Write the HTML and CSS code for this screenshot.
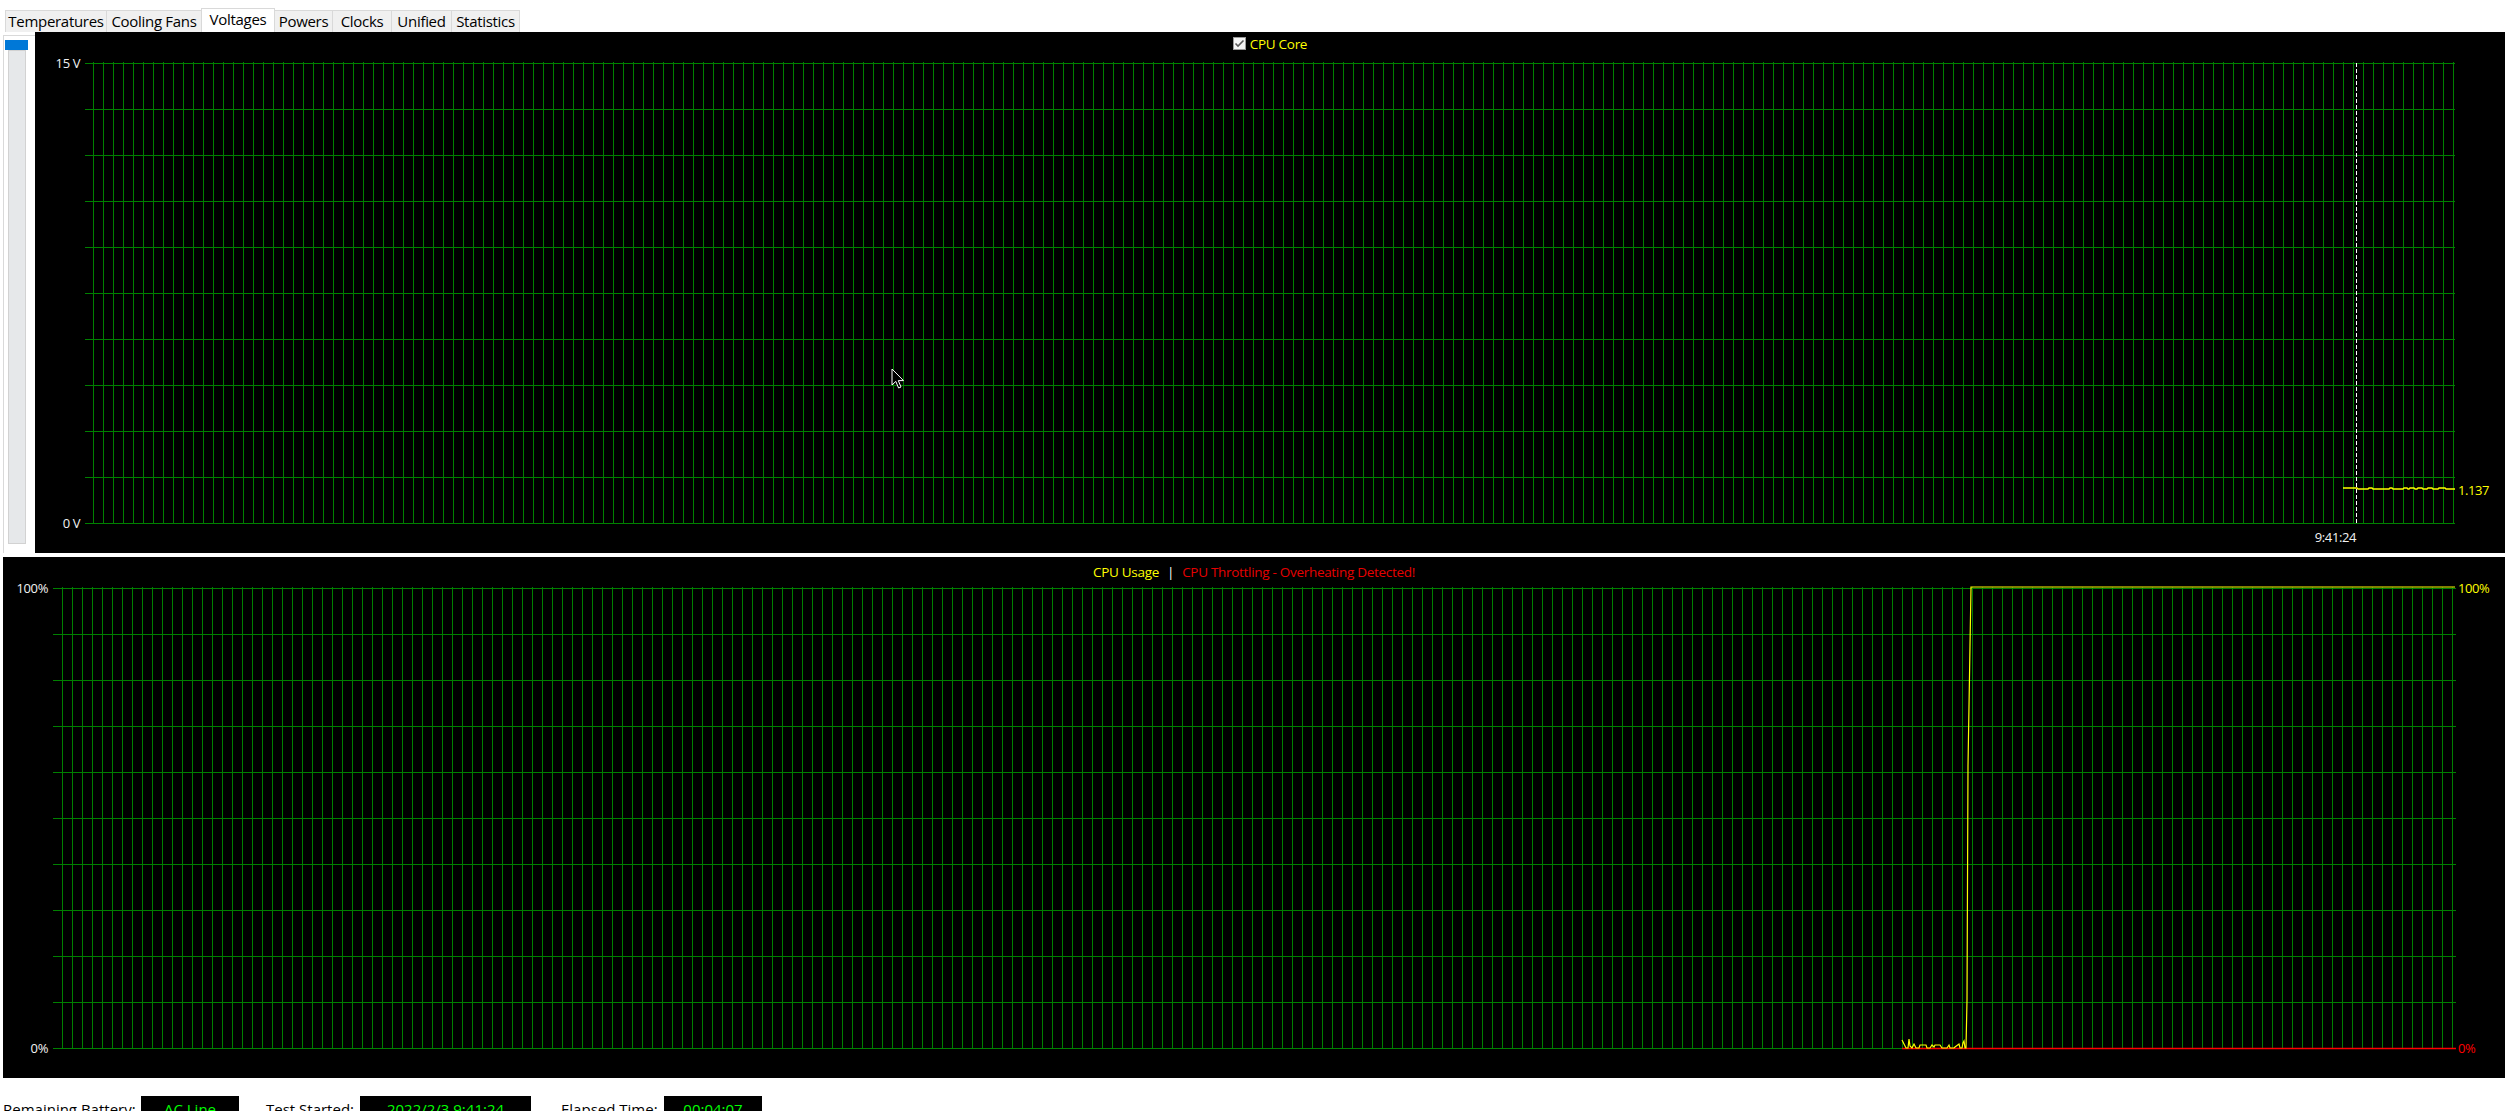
FILE: index.html
```html
<!DOCTYPE html>
<html>
<head>
<meta charset="utf-8">
<title>Voltages</title>
<link rel="stylesheet" href="styles.css">
</head>
<body>
<div class="app">
  <div class="tabs">
    <div class="tab">Temperatures</div>
    <div class="tab">Cooling Fans</div>
    <div class="tab active">Voltages</div>
    <div class="tab">Powers</div>
    <div class="tab">Clocks</div>
    <div class="tab">Unified</div>
    <div class="tab">Statistics</div>
  </div>

  <div class="upper">
    <div class="side">
      <div class="thumb"></div>
      <div class="track"></div>
    </div>
    <div class="chart chart-top">
      <div class="chart-title">
        <svg class="checkbox" width="13" height="13" viewBox="0 0 13 13">
          <rect x="0.5" y="0.5" width="12" height="12" fill="#f4f4f4" stroke="#9a9a9a"/>
          <path d="M2.5 6.5 L5 9 L10.5 3.5" fill="none" stroke="#5a5a5a" stroke-width="1.6"/>
        </svg>
        <span class="yellow">CPU Core</span>
      </div>
      <svg class="plot" width="2470" height="497" viewBox="0 0 2470 497">
        <defs>
          <pattern id="tv" x="58" y="0" width="10" height="10" patternUnits="userSpaceOnUse">
            <rect x="0" y="0" width="1" height="10" fill="#008000"/>
          </pattern>
          <pattern id="th" x="0" y="7" width="10" height="46" patternUnits="userSpaceOnUse">
            <rect x="0" y="0" width="10" height="1" fill="#008000"/>
          </pattern>
        </defs>
        <rect x="58" y="6" width="2361" height="462" fill="url(#tv)"/>
        <rect x="50" y="7" width="2370" height="461" fill="url(#th)"/>
        <text class="axis" x="45" y="11.5" text-anchor="end">15 V</text>
        <text class="axis" x="45" y="471.5" text-anchor="end">0 V</text>
        <line x1="2321.5" y1="7" x2="2321.5" y2="467" stroke="#ffffff" stroke-width="1" stroke-dasharray="4 2"/>
        <polyline fill="none" stroke="#ffff00" stroke-width="1.4" points="2308,432 2322,432 2323,433 2333,433 2334,432 2337,432 2338,433 2354,433 2355,432 2357,432 2358,433 2368,433 2369,432 2372,432 2373,433 2374,433 2375,432 2379,432 2380,433 2382,433 2383,432 2387,432 2388,433 2392,433 2393,432 2397,432 2398,433 2403,433 2404,432 2410,432 2411,433 2420,433"/>
        <text class="axis yellow-fill" x="2423" y="439">1.137</text>
        <text class="axis" x="2321" y="485.5" text-anchor="end">9:41:24</text>
      </svg>
    </div>
  </div>

  <div class="chart chart-bottom">
    <div class="chart-title title-bottom">
      <span class="yellow">CPU Usage</span>
      <span class="sep">|</span>
      <span class="red">CPU Throttling - Overheating Detected!</span>
    </div>
    <svg class="plot" width="2502" height="494" viewBox="0 0 2502 494">
      <defs>
        <pattern id="bv" x="59" y="0" width="10" height="10" patternUnits="userSpaceOnUse">
          <rect x="0" y="0" width="1" height="10" fill="#008000"/>
        </pattern>
        <pattern id="bh" x="0" y="4" width="10" height="46" patternUnits="userSpaceOnUse">
          <rect x="0" y="0" width="10" height="1" fill="#008000"/>
        </pattern>
      </defs>
      <rect x="59" y="3" width="2391" height="462" fill="url(#bv)"/>
      <rect x="50" y="4" width="2403" height="461" fill="url(#bh)"/>
      <text class="axis" x="45" y="8.5" text-anchor="end">100%</text>
      <text class="axis" x="45" y="468.5" text-anchor="end">0%</text>
      <line x1="1899" y1="464.5" x2="2453" y2="464.5" stroke="#ff0000" stroke-width="1.4"/>
      <polyline fill="none" stroke="#ffff00" stroke-width="1.2" points="1899,456 1901,460 1903,464 1905,464 1906,455 1907,462 1909,464 1911,460 1913,464 1916,464 1917,461 1923,461 1924,464 1927,464 1929,461 1931,463 1932,461 1937,461 1939,464 1944,464 1946,461 1947,464 1951,464 1952,463 1956,460 1957,464 1959,464 1960,459 1961,457 1962,464 1963,464 1964,416 1965,182 1967,62 1968,3 2452,3"/>
      <text class="axis yellow-fill" x="2455" y="8.5">100%</text>
      <text class="axis red-fill" x="2455" y="468.5">0%</text>
    </svg>
  </div>

  <div class="status">
    <div class="stat stat-battery">
      <span class="stat-label">Remaining Battery:</span>
      <span class="stat-box box-short">AC Line</span>
    </div>
    <div class="stat stat-started">
      <span class="stat-label">Test Started:</span>
      <span class="stat-box box-long">2022/2/3 9:41:24</span>
    </div>
    <div class="stat stat-elapsed">
      <span class="stat-label">Elapsed Time:</span>
      <span class="stat-box box-short">00:04:07</span>
    </div>
  </div>

  <svg class="cursor" width="14" height="22" viewBox="0 0 14 22">
    <path d="M1 1 L1 17 L4.8 13.4 L7.6 20 L10 19 L7.3 12.6 L12.5 12.6 Z" fill="#000" stroke="#fff" stroke-width="1" stroke-linejoin="round"/>
  </svg>
</div>
</body>
</html>
```

FILE: styles.css
```css
html, body {
  margin: 0;
  padding: 0;
  background: #ffffff;
  overflow: hidden;
}

body {
  font-family: "Open Sans", "Noto Sans", sans-serif;
  color: #000;
}

.app {
  position: relative;
  width: 2510px;
  height: 1111px;
  overflow: hidden;
}

/* Tabs */
.tabs {
  display: flex;
  align-items: flex-end;
  height: 32px;
  padding-left: 5px;
  box-sizing: border-box;
}

.tab {
  box-sizing: border-box;
  height: 22px;
  padding: 0;
  border: 1px solid #d9d9d9;
  border-bottom: none;
  background: #f0f0f0;
  font-size: 15px;
  letter-spacing: -0.3px;
  line-height: 21px;
  text-align: center;
  white-space: nowrap;
  margin-right: -1px;
}

.tab:nth-child(1) { width: 102px; }
.tab:nth-child(2) { width: 96px; }
.tab:nth-child(3) { width: 74px; }
.tab:nth-child(4) { width: 59px; }
.tab:nth-child(5) { width: 60px; }
.tab:nth-child(6) { width: 61px; }
.tab:nth-child(7) { width: 69px; }

.tab.active {
  height: 24px;
  line-height: 21px;
  background: #ffffff;
  position: relative;
  z-index: 1;
}

/* Upper area */
.upper {
  display: flex;
  height: 521px;
}

.side {
  box-sizing: border-box;
  width: 32px;
  height: 518px;
  margin-left: 3px;
  margin-top: 3px;
  border-left: 1px solid #d9d9d9;
  border-top: 1px solid #d9d9d9;
  padding: 4px 0 9px;
  display: flex;
  flex-direction: column;
  align-items: flex-start;
}

.thumb {
  width: 23px;
  height: 10px;
  margin-left: 1px;
  background: #0078d7;
  flex: none;
}

.track {
  box-sizing: border-box;
  width: 18px;
  flex: 1;
  margin-left: 4px;
  background: #e6e8ea;
  border: 1px solid #d2d2d2;
}

/* Charts */
.chart {
  background: #000000;
  display: flex;
  flex-direction: column;
}

.chart-top {
  width: 2470px;
  height: 521px;
}

.chart-bottom {
  width: 2502px;
  height: 521px;
  margin-top: 4px;
  margin-left: 3px;
}

.chart-title {
  height: 24px;
  flex: none;
  display: flex;
  align-items: center;
  justify-content: center;
  gap: 4px;
  font-size: 13.5px;
  letter-spacing: -0.3px;
  line-height: 24px;
  white-space: nowrap;
}

.title-bottom {
  padding-top: 3px;
  gap: 0;
}

.checkbox {
  display: block;
  margin-top: -1px;
}

.yellow { color: #ffff00; }
.red { color: #e60000; }
.sep {
  color: #ffffff;
  padding: 0 8px;
}

.plot {
  display: block;
  flex: none;
  overflow: visible;
}

.axis {
  font-family: "Open Sans", "Noto Sans", sans-serif;
  font-size: 13px;
  letter-spacing: -0.4px;
  fill: #f2f2f2;
}

.yellow-fill { fill: #ffff00; }
.red-fill { fill: #ff0000; }

/* Status row */
.status {
  display: flex;
  align-items: flex-start;
  margin-top: 18px;
  padding-left: 3px;
}

.stat {
  display: flex;
  align-items: flex-start;
}

.stat-label {
  font-size: 15px;
  line-height: 26px;
  color: #000;
  white-space: nowrap;
}

.stat-battery .stat-label { width: 138px; }
.stat-started { margin-left: 27px; }
.stat-started .stat-label { width: 94px; }
.stat-elapsed { margin-left: 30px; }
.stat-elapsed .stat-label { width: 103px; }

.stat-box {
  display: block;
  height: 26px;
  background: #000;
  color: #00ff00;
  font-size: 15px;
  line-height: 26px;
  text-align: center;
}

.box-short { width: 98px; }
.box-long { width: 171px; }

/* Mouse pointer */
.cursor {
  position: absolute;
  left: 891px;
  top: 368px;
}
```
